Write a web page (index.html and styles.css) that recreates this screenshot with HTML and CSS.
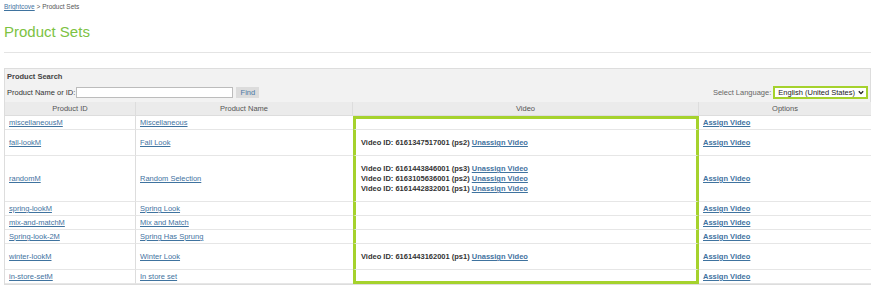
FILE: index.html
```html
<!DOCTYPE html>
<html>
<head>
<meta charset="utf-8">
<link rel="stylesheet" href="styles.css">
</head>
<body>
<div class="page">
  <div class="crumbs"><a href="#">Brightcove</a> &gt; Product Sets</div>
  <h1 class="title">Product Sets</h1>
  <hr class="rule">
  <div class="panel">
    <div class="panel-title">Product Search</div>
    <div class="search-row">
      <div class="search-left">
        <label class="lbl">Product Name or ID:</label>
        <span class="input"></span>
        <span class="btn">Find</span>
      </div>
      <div class="search-right">
        <span class="lang-lbl">Select Language:</span>
        <span class="select">English (United States)
          <svg class="chev" width="6" height="5" viewBox="0 0 6 5"><path d="M0.8 1.2 L3 3.6 L5.2 1.2" fill="none" stroke="#222" stroke-width="1.3"/></svg>
        </span>
      </div>
    </div>
    <table class="grid">
      <colgroup><col class="c1"><col class="c2"><col class="c3"><col class="c4"></colgroup>
      <thead>
        <tr><th>Product ID</th><th>Product Name</th><th class="vh">Video</th><th>Options</th></tr>
      </thead>
      <tbody>
        <tr><td><a href="#">miscellaneousM</a></td><td><a href="#">Miscellaneous</a></td><td class="v first"></td><td><a class="opt" href="#">Assign Video</a></td></tr>
        <tr><td><a href="#">fall-lookM</a></td><td><a href="#">Fall Look</a></td><td class="v"><div class="vids"><div>Video ID: 6161347517001 (ps2) <a href="#">Unassign Video</a></div></div></td><td><a class="opt" href="#">Assign Video</a></td></tr>
        <tr><td><a href="#">randomM</a></td><td><a href="#">Random Selection</a></td><td class="v"><div class="vids"><div>Video ID: 6161443846001 (ps3) <a href="#">Unassign Video</a></div><div>Video ID: 6163105636001 (ps2) <a href="#">Unassign Video</a></div><div>Video ID: 6161442832001 (ps1) <a href="#">Unassign Video</a></div></div></td><td><a class="opt" href="#">Assign Video</a></td></tr>
        <tr><td><a href="#">spring-lookM</a></td><td><a href="#">Spring Look</a></td><td class="v"></td><td><a class="opt" href="#">Assign Video</a></td></tr>
        <tr><td><a href="#">mix-and-matchM</a></td><td><a href="#">Mix and Match</a></td><td class="v"></td><td><a class="opt" href="#">Assign Video</a></td></tr>
        <tr><td><a href="#">Spring-look-2M</a></td><td><a href="#">Spring Has Sprung</a></td><td class="v"></td><td><a class="opt" href="#">Assign Video</a></td></tr>
        <tr><td><a href="#">winter-lookM</a></td><td><a href="#">Winter Look</a></td><td class="v"><div class="vids"><div>Video ID: 6161443162001 (ps1) <a href="#">Unassign Video</a></div></div></td><td><a class="opt" href="#">Assign Video</a></td></tr>
        <tr><td><a href="#">in-store-setM</a></td><td><a href="#">In store set</a></td><td class="v last"></td><td><a class="opt" href="#">Assign Video</a></td></tr>
      </tbody>
    </table>
  </div>
</div>
</body>
</html>
```
FILE: styles.css
```css
* { box-sizing: border-box; }
html, body { margin: 0; padding: 0; background: #fff; }
body { font-family: "Liberation Sans", Arial, sans-serif; color: #333; }
a { color: #3f739f; }
.page { padding: 0 3px 0 4px; }
.crumbs { font-size: 6.5px; line-height: 9px; padding-top: 2px; color: #555; }
.crumbs a { color: #3f739f; }
.title { margin: 12px 0 0; font-size: 15px; line-height: 18px; font-weight: normal; color: #7cc242; }
.rule { margin: 11px 0 0; border: 0; border-top: 1px solid #e4e4e4; height: 0; }
.panel { margin-top: 15px; border: 1px solid #ddd; background: #f2f2f2; }
.panel-title { font-size: 7.5px; line-height: 10px; font-weight: bold; color: #444; padding: 3px 0 0 2px; }
.search-row { display: flex; justify-content: space-between; align-items: center; margin-top: 4px; height: 13px; padding: 0 2px; font-size: 7.5px; }
.search-left, .search-right { display: flex; align-items: center; }
.lbl { color: #333; margin-right: 1px; }
.input { display: block; width: 157px; height: 11px; background: #fff; border: 1px solid #bcbcbc; }
.btn { display: block; margin-left: 3px; width: 23px; height: 11px; line-height: 11px; text-align: center; background: #dcdcdc; color: #4b7aa5; }
.lang-lbl { color: #666; margin-right: 2px; }
.select { display: flex; align-items: center; gap: 3px; height: 13px; padding: 0 2px 0 3px; border: 2px solid #a5d22d; background: #fff; color: #222; font-size: 7.5px; }
.chev { display: block; }
.grid { width: 866px; margin-top: 3px; border-collapse: separate; border-spacing: 0; table-layout: fixed; font-size: 7.5px; background: #fff; }
.c1 { width: 131px; } .c2 { width: 217px; } .c3 { width: 346px; } .c4 { width: 172px; }
.grid th { background: #ebebeb; color: #555; font-weight: normal; line-height: 10px; padding: 2px 4px 1px; border-right: 1px solid #ddd; border-bottom: 1px solid #ddd; }
.grid th:last-child, .grid td:last-child { border-right: 0; }
.grid td { line-height: 10px; padding: 2px 3px 1px 4px; vertical-align: middle; border-right: 1px solid #ddd; border-bottom: 1px solid #e6e6e6; }
.grid td.v { border-left: 3px solid #a5d22d; border-right: 3px solid #a5d22d; padding-left: 5px; font-weight: bold; color: #333; }
.grid td.v.first { border-top: 3px solid #a5d22d; }
.grid td.v.last { border-bottom: 3px solid #a5d22d; }
.grid tr td:nth-child(2) { border-right: 0; }
.vids { margin: 6px 0 6px; }
.opt { font-weight: bold; }
```
